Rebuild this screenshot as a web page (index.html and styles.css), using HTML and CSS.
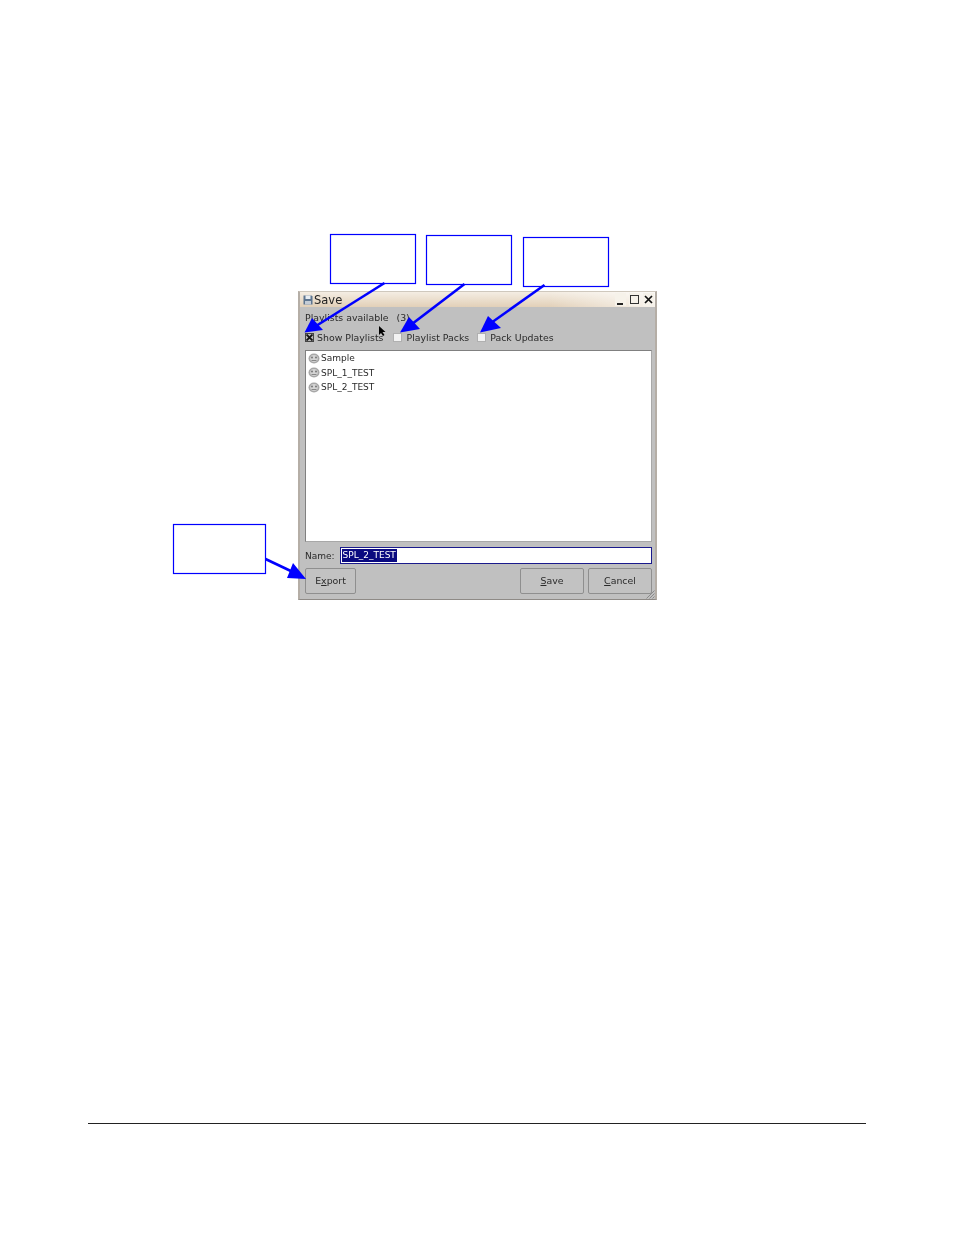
FILE: index.html
```html
<!DOCTYPE html>
<html lang="en">

<head>
  <meta charset="UTF-8">
  <meta name="viewport" content="width=device-width, initial-scale=1.0">
  <title>Save dialog</title>
  <link rel="stylesheet" href="styles.css">
</head>

<body>
  <main class="page">
    <section class="window">
      <div class="titlebar">
        <svg class="title-icon" width="10" height="10" viewBox="0 0 10 10">
          <path d="M0.5 0.5h8l1 1v8h-9z" fill="#5d7590" />
          <rect x="2.500" y="0.5" width="5" height="3.500" fill="#e8edf2" />
          <rect x="2" y="6" width="6" height="3.500" fill="#c4ccd6" />
        </svg>
        <span class="title-text">Save</span>
        <div class="title-btns">
          <span class="title-btn"><svg width="11" height="13" viewBox="0 0 11 13"><rect x="2" y="10" width="6" height="2" fill="#222" /></svg></span>
          <span class="title-btn"><svg width="11" height="13" viewBox="0 0 11 13"><rect x="1.500" y="2.500" width="8" height="8" fill="none" stroke="#333" /></svg></span>
          <span class="title-btn"><svg width="11" height="13" viewBox="0 0 11 13"><path d="M2 3l7 7M9 3l-7 7" stroke="#111" stroke-width="1.700" /></svg></span>
        </div>
      </div>

      <div class="content">
        <div class="avail">Playlists available <span class="count">(3)</span></div>

        <div class="checks">
          <label class="check check-show">
            <span class="box box-on">
              <svg width="7" height="7" viewBox="0 0 7 7"><path d="M0.5 0.5l6 6M6.500 0.5l-6 6" stroke="#111" stroke-width="1.800" /></svg>
            </span>
            Show Playlists
          </label>
          <label class="check check-packs"><span class="box"></span>Playlist Packs</label>
          <label class="check"><span class="box"></span>Pack Updates</label>
        </div>

        <ul class="list">
          <li class="list-item">
            <svg class="disc" width="12" height="11" viewBox="0 0 12 11"><use href="#disc" /></svg>Sample
          </li>
          <li class="list-item">
            <svg class="disc" width="12" height="11" viewBox="0 0 12 11"><use href="#disc" /></svg>SPL_1_TEST
          </li>
          <li class="list-item">
            <svg class="disc" width="12" height="11" viewBox="0 0 12 11"><use href="#disc" /></svg>SPL_2_TEST
          </li>
        </ul>

        <div class="name-row">
          <span class="name-label">Name:</span>
          <div class="name-input"><span class="selected">SPL_2_TEST</span></div>
        </div>

        <div class="actions">
          <button class="btn btn-export">E<u>x</u>port</button>
          <div class="actions-right">
            <button class="btn btn-save"><u>S</u>ave</button>
            <button class="btn btn-cancel"><u>C</u>ancel</button>
          </div>
        </div>
      </div>

      <svg class="grip" width="10" height="10" viewBox="0 0 10 10">
        <path d="M9.500 1.500l-8 8M9.500 4.500l-5 5M9.500 7.500l-2 2" stroke="#8a8a8a" />
      </svg>
    </section>

    <hr class="footer-rule">
  </main>

  <!-- callout boxes and arrows sit over the screenshot -->
  <svg class="callouts" width="954" height="1235" viewBox="0 0 954 1235">
    <defs>
      <g id="disc">
        <ellipse cx="6" cy="5.500" rx="5.500" ry="5" fill="#a8a8a8" />
        <ellipse cx="6" cy="5.500" rx="3.800" ry="3.400" fill="#d4d4d4" />
        <circle cx="4" cy="4.500" r="1" fill="#777" />
        <circle cx="8" cy="4.500" r="1" fill="#777" />
        <path d="M3.500 7.500h5" stroke="#888" />
      </g>
    </defs>
    <g fill="none" stroke="#00f" stroke-width="1.200">
      <rect x="330.500" y="234.500" width="85" height="49" />
      <rect x="426.500" y="235.500" width="85" height="49" />
      <rect x="523.500" y="237.500" width="85" height="49" />
      <rect x="173.500" y="524.500" width="92" height="49" />
    </g>
    <g stroke="#00f" stroke-width="2.600" fill="none">
      <path d="M384.500 283L316 326" />
      <path d="M464.500 284L412 324" />
      <path d="M544.500 285L491 323" />
      <path d="M265.500 559L295 573" />
    </g>
    <g fill="#00f">
      <path d="M304.500 332.500L312 318L323 330z" />
      <path d="M400 332.500L409 317L420 329z" />
      <path d="M480 332.500L488 316L501 328z" />
      <path d="M306 579L293 563L287 578z" />
    </g>
    <path class="cursor" d="M379 326v9l2-2 2 3 1.500-1-2-3h3z" fill="#000" />
  </svg>
</body>

</html>
```

FILE: styles.css
```css
* {
  margin: 0;
  padding: 0;
  box-sizing: border-box;
}

body {
  background-color: #fff;
  font-family: "DejaVu Sans", sans-serif;
  font-size: 9.4px;
  color: #2a2a2a;
}

.page {
  width: 954px;
  height: 1235px;
  padding-top: 291px;
  overflow: hidden;
}

.window {
  position: relative;
  width: 359px;
  height: 309px;
  margin-left: 298px;
  background-color: #c0c0c0;
  border-top: 1px solid #cfc8bd;
  border-left: 2px solid #b5aea6;
  border-right: 2px solid #b5aea6;
  border-bottom: 1px solid #8e8a86;
  filter: blur(0.4px);
}

.titlebar {
  display: flex;
  align-items: center;
  height: 15px;
  padding: 0 1px 0 3px;
  background: linear-gradient(90deg, rgba(255, 255, 255, 0) 70%, rgba(255, 255, 255, 0.7) 100%), linear-gradient(180deg, #f4ede3 0%, #e2d0b8 100%);
}

.title-icon {
  margin-right: 1px;
}

.title-text {
  font-size: 11.500px;
  color: #222;
}

.title-btns {
  display: flex;
  gap: 3px;
  margin-left: auto;
}

.title-btn {
  display: flex;
  background-color: #f6f2ea;
}

.content {
  padding: 4px 3px 0 5px;
}

.avail {
  height: 14px;
  line-height: 14px;
}

.count {
  margin-left: 5px;
}

.checks {
  display: flex;
  align-items: center;
  height: 18px;
  margin-top: 3px;
}

.check {
  display: flex;
  align-items: center;
  gap: 4px;
}

.check-show {
  gap: 3px;
  margin-right: 10px;
}

.check-packs {
  margin-right: 8px;
}

.box {
  display: flex;
  align-items: center;
  justify-content: center;
  width: 9px;
  height: 9px;
  background-color: #f2f2f2;
  border: 1px solid #b0b0b0;
}

.box-on {
  background-color: #b8b8b8;
  border-color: #444;
}

.box svg {
  flex: none;
}

.list {
  height: 192px;
  margin-top: 4px;
  padding: 0 2px;
  font-size: 9px;
  list-style: none;
  background-color: #fff;
  border: 1px solid #808080;
  border-right-color: #a8a8a8;
  border-bottom-color: #a8a8a8;
}

.list-item {
  display: flex;
  align-items: center;
  gap: 1px;
  height: 14.500px;
}

.name-row {
  display: flex;
  align-items: center;
  gap: 5px;
  margin-top: 5px;
  font-size: 9px;
}

.name-input {
  display: flex;
  align-items: center;
  flex: 1;
  height: 17px;
  padding-left: 1px;
  background-color: #fff;
  border: 1px solid #1a1a8c;
}

.selected {
  height: 13px;
  line-height: 13px;
  padding: 0 1px;
  background-color: #0a0a80;
  color: #fff;
}

.actions {
  display: flex;
  justify-content: space-between;
  margin-top: 4px;
}

.actions-right {
  display: flex;
  gap: 4px;
}

.btn {
  height: 26px;
  padding-bottom: 2px;
  font: inherit;
  color: #2a2a2a;
  background-color: #c2c2c2;
  border: 1px solid #8f8f8f;
  border-radius: 2px;
}

.btn-export {
  width: 51px;
}

.btn-save {
  width: 64px;
}

.btn-cancel {
  width: 64px;
}

.grip {
  position: absolute;
  right: 0;
  bottom: 0;
}

.footer-rule {
  width: 778px;
  height: 1px;
  margin: 523px 0 0 88px;
  background-color: #222;
  border: 0;
}

.callouts {
  position: absolute;
  left: 0;
  top: 0;
}
```
